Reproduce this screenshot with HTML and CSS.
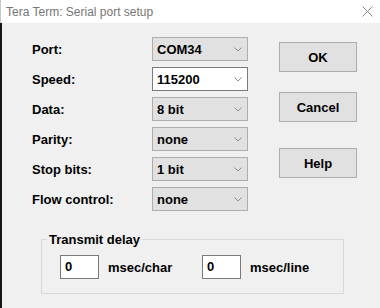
FILE: index.html
```html
<!DOCTYPE html>
<html lang="en">
<head>
    <meta charset="UTF-8">
    <title>Tera Term: Serial port setup</title>
    <link rel="stylesheet" href="styles.css">
</head>
<body>
    <div class="window">
        <div class="titlebar">
            <span class="title">Tera Term: Serial port setup</span>
            <svg class="close" width="11" height="11" viewBox="0 0 11 11">
                <path d="M0.5 0.5 L10.5 10.5 M10.5 0.5 L0.5 10.5" stroke="#8a8a8a" stroke-width="1" fill="none"/>
            </svg>
        </div>
        <div class="dialog-body">
            <div class="main">
                <div class="fields">
                    <label>Port:</label>
                    <div class="select"><span>COM34</span><svg class="chevron" width="8" height="5" viewBox="0 0 8 5"><polyline points="0.5,0.5 4,4 7.5,0.5" fill="none" stroke="#8c8c8c"/></svg></div>

                    <label>Speed:</label>
                    <div class="select editable"><span>115200</span><svg class="chevron" width="8" height="5" viewBox="0 0 8 5"><polyline points="0.5,0.5 4,4 7.5,0.5" fill="none" stroke="#8c8c8c"/></svg></div>

                    <label>Data:</label>
                    <div class="select"><span>8 bit</span><svg class="chevron" width="8" height="5" viewBox="0 0 8 5"><polyline points="0.5,0.5 4,4 7.5,0.5" fill="none" stroke="#8c8c8c"/></svg></div>

                    <label>Parity:</label>
                    <div class="select"><span>none</span><svg class="chevron" width="8" height="5" viewBox="0 0 8 5"><polyline points="0.5,0.5 4,4 7.5,0.5" fill="none" stroke="#8c8c8c"/></svg></div>

                    <label>Stop bits:</label>
                    <div class="select"><span>1 bit</span><svg class="chevron" width="8" height="5" viewBox="0 0 8 5"><polyline points="0.5,0.5 4,4 7.5,0.5" fill="none" stroke="#8c8c8c"/></svg></div>

                    <label>Flow control:</label>
                    <div class="select"><span>none</span><svg class="chevron" width="8" height="5" viewBox="0 0 8 5"><polyline points="0.5,0.5 4,4 7.5,0.5" fill="none" stroke="#8c8c8c"/></svg></div>
                </div>
                <div class="buttons">
                    <button class="btn btn-ok">OK</button>
                    <button class="btn">Cancel</button>
                    <button class="btn btn-help">Help</button>
                </div>
            </div>

            <fieldset class="group">
                <legend>Transmit delay</legend>
                <div class="delay-row">
                    <div class="delay-item">
                        <div class="num-input">0</div>
                        <span>msec/char</span>
                    </div>
                    <div class="delay-item">
                        <div class="num-input">0</div>
                        <span>msec/line</span>
                    </div>
                </div>
            </fieldset>
        </div>
    </div>
</body>
</html>
```

FILE: styles.css
```css
* {
    margin: 0;
    padding: 0;
    box-sizing: border-box;
}

body {
    width: 380px;
    height: 308px;
    overflow: hidden;
    background-color: #f0f0f0;
    font-family: "Liberation Sans", Arial, sans-serif;
    font-size: 13px;
    color: #000;
}

.window {
    height: 308px;
    display: flex;
    flex-direction: column;
}

.titlebar {
    height: 23px;
    background: #fff;
    border-left: 1px solid #c8c8c8;
    display: flex;
    align-items: center;
    justify-content: space-between;
    padding: 0 7px 0 5px;
}

.title {
    font-size: 12px;
    color: #767676;
}

.close {
    display: block;
    margin-top: -1px;
}

.dialog-body {
    flex: 1;
    border-left: 2px solid #151515;
    padding: 14px 0 0 30px;
}

.main {
    display: flex;
}

.fields {
    display: grid;
    grid-template-columns: 120px 96px;
    grid-auto-rows: 24px;
    row-gap: 6px;
    align-items: center;
    font-weight: bold;
}

.select {
    height: 24px;
    display: flex;
    align-items: center;
    justify-content: space-between;
    padding: 0 5px 0 4px;
    background: #e1e1e1;
    border: 1px solid #adadad;
}

.select.editable {
    background: #fff;
    border-color: #7a7a7a;
}

.chevron {
    display: block;
}

.buttons {
    display: flex;
    flex-direction: column;
    margin-left: 31px;
    padding-top: 5px;
}

.btn {
    width: 78px;
    height: 30px;
    background: #e1e1e1;
    border: 1px solid #adadad;
    font-family: inherit;
    font-size: 13px;
    font-weight: bold;
    color: #000;
}

.btn-ok {
    margin-bottom: 20px;
}

.btn-help {
    margin-top: 26px;
}

.group {
    width: 303px;
    margin: 21px 0 0 9px;
    padding: 0 0 0 5px;
    border: 1px solid #d9d9d9;
}

.group legend {
    padding: 0 2px;
    line-height: 15px;
    font-weight: bold;
}

.delay-row {
    display: grid;
    grid-template-columns: 142px auto;
    margin: 8px 0 14px 13px;
    font-weight: bold;
}

.delay-item {
    display: flex;
    align-items: center;
    gap: 9px;
}

.num-input {
    width: 39px;
    height: 24px;
    background: #fff;
    border: 1px solid #7a7a7a;
    padding-left: 4px;
    line-height: 22px;
}
```
